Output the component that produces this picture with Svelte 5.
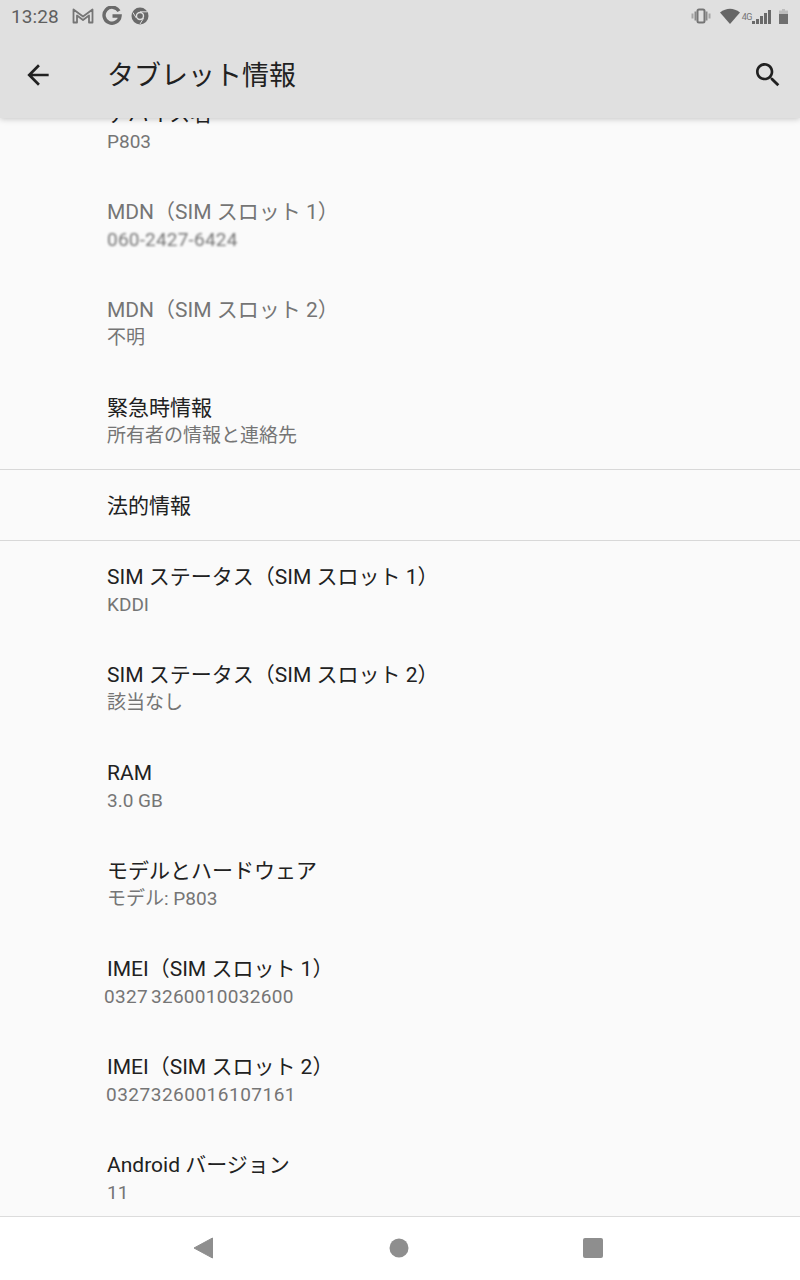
<script>
    const upper = [
        { title: "デバイス名", sub: "P803" },
        { title: "MDN（SIM スロット 1）", sub: "060-2427-6424", disabled: true, blur: true },
        { title: "MDN（SIM スロット 2）", sub: "不明", disabled: true },
        { title: "緊急時情報", sub: "所有者の情報と連絡先" }
    ];
    const lower = [
        { title: "SIM ステータス（SIM スロット 1）", sub: "KDDI" },
        { title: "SIM ステータス（SIM スロット 2）", sub: "該当なし" },
        { title: "RAM", sub: "3.0 GB" },
        { title: "モデルとハードウェア", sub: "モデル: P803" },
        { title: "IMEI（SIM スロット 1）", sub: "0327 3260010032600", cls: "imei1" },
        { title: "IMEI（SIM スロット 2）", sub: "03273260016107161", cls: "imei2" },
        { title: "Android バージョン", sub: "11" }
    ];
</script>

{#snippet row(item)}
    <div class="row" class:disabled={item.disabled}>
        <div class="title">{item.title}</div>
        <div class="sub {item.cls || ''}" class:blur={item.blur}>{item.sub}</div>
    </div>
{/snippet}

<div class="screen">
    <div class="appbar">
        <div class="status">
            <span class="time">13:28</span>
            <svg class="notif" width="22" height="18" viewBox="0 0 22 18">
                <path d="M1.500 15.500V2.500L11 9.500l9.500-7v13h-3.500V8.500L11 13 5 8.500v7z" fill="none" stroke="#757575" stroke-width="1.800" stroke-linejoin="round" />
            </svg>
            <svg class="notif" width="20" height="20" viewBox="0 0 20 20">
                <path d="M17 5.200A8 8 0 1 0 18 10h-7.500" fill="none" stroke="#6a6a6a" stroke-width="3.400" />
            </svg>
            <svg class="notif" width="18" height="18" viewBox="0 0 18 18">
                <circle cx="9" cy="9" r="8.500" fill="#6a6a6a" />
                <circle cx="9" cy="9" r="4.200" fill="#e0e0e0" />
                <circle cx="9" cy="9" r="2.800" fill="#6a6a6a" />
                <path d="M9 4.800h7M5.300 11l-3.400-5.500M12.600 11.200 9 17" stroke="#e0e0e0" stroke-width="1" />
            </svg>
            <span class="spacer"></span>
            <svg class="vibrate" width="20" height="16" viewBox="0 0 20 16">
                <rect x="6.500" y="1.500" width="7" height="13" rx="1.500" fill="none" stroke="#757575" stroke-width="2" />
                <path d="M3.500 3.500h2v9h-2zM14.500 3.500h2v9h-2z" fill="#8a8a8a" />
                <path d="M0.500 5.500h2v5h-2zM17.500 5.500h2v5h-2z" fill="#a5a5a5" />
            </svg>
            <svg class="wifi" width="20" height="16" viewBox="0 0 20 16">
                <path d="M0 4.500Q10-3 20 4.500L10 16z" fill="#666" />
            </svg>
            <span class="net">4G</span>
            <svg class="signal" width="19" height="14" viewBox="0 0 19 14">
                <path d="M0 11h3v3H0zM4 9h3v5H4zM8 6h3v8H8zM12 3h3v11h-3zM16 0h3v14h-3z" fill="#6a6a6a" />
            </svg>
            <svg class="battery" width="9" height="15" viewBox="0 0 9 15">
                <path d="M3 0h3v1.500h3V15H0V1.500h3z" fill="#bdbdbd" />
                <path d="M0 5h9v10H0z" fill="#6f6f6f" />
            </svg>
        </div>
        <div class="toolbar">
            <svg width="32" height="32" viewBox="0 0 24 24">
                <path d="M20 11H7.830l5.590-5.590L12 4l-8 8 8 8 1.410-1.410L7.830 13H20v-2z" fill="#212121" />
            </svg>
            <h1>タブレット情報</h1>
            <svg width="32" height="32" viewBox="0 0 24 24">
                <path d="M15.500 14h-.79l-.28-.27C15.410 12.590 16 11.110 16 9.500 16 5.910 13.090 3 9.500 3S3 5.910 3 9.500 5.910 16 9.500 16c1.610 0 3.090-.59 4.230-1.570l.27.28v.79l5 4.990L20.490 19l-4.990-5zm-6 0C7.010 14 5 11.990 5 9.500S7.010 5 9.500 5 14 7.010 14 9.500 11.990 14 9.500 14z" fill="#212121" />
            </svg>
        </div>
    </div>

    <div class="content">
        <div class="list">
            {#each upper as item}
                {@render row(item)}
            {/each}
            <div class="legal">法的情報</div>
            {#each lower as item}
                {@render row(item)}
            {/each}
        </div>
    </div>

    <div class="navbar">
        <svg width="22" height="22" viewBox="0 0 22 22">
            <path d="M1 11 19.500 1v20z" fill="#8e8e8e" stroke="#8e8e8e" stroke-linejoin="round" />
        </svg>
        <svg width="20" height="20" viewBox="0 0 20 20">
            <circle cx="10" cy="10" r="9.500" fill="#8e8e8e" />
        </svg>
        <svg width="20" height="20" viewBox="0 0 20 20">
            <rect width="20" height="20" rx="2" fill="#8e8e8e" />
        </svg>
    </div>
</div>

<style>
    :global(body) {
        margin: 0;
        background: #fafafa;
    }
    .screen {
        width: 800px;
        height: 1280px;
        display: flex;
        flex-direction: column;
        overflow: hidden;
        font-family: Roboto, "Noto Sans CJK JP", sans-serif;
    }
    .appbar {
        height: 118px;
        flex-shrink: 0;
        background: #e0e0e0;
        box-shadow: 0 1px 6px rgba(0, 0, 0, 0.22);
        position: relative;
        z-index: 1;
    }
    .status {
        height: 32px;
        display: flex;
        align-items: center;
        padding: 0 12px 0 11px;
    }
    .time {
        font-size: 19px;
        color: #5f5f5f;
        letter-spacing: 0.1px;
        margin-right: 13px;
    }
    .notif {
        margin-right: 8px;
    }
    .notif:nth-of-type(2) {
        margin-right: 9px;
    }
    .spacer {
        flex: 1;
    }
    .vibrate {
        margin-right: 9px;
    }
    .wifi {
        margin-right: 2px;
    }
    .net {
        font-size: 9px;
        color: #757575;
        letter-spacing: -0.5px;
        margin-top: 2px;
    }
    .signal {
        margin-right: 8px;
        margin-top: 1px;
    }
    .toolbar {
        height: 86px;
        display: flex;
        align-items: center;
        padding: 0 16px 0 22px;
        box-sizing: border-box;
    }
    h1 {
        flex: 1;
        margin: 0 0 3px 53px;
        font-size: 27px;
        font-weight: 400;
        color: #212121;
    }
    .content {
        flex: 1;
        min-height: 0;
        overflow: hidden;
    }
    .list {
        margin-top: -40px;
    }
    .row {
        height: 98px;
        box-sizing: border-box;
        padding: 22px 0 0 107px;
    }
    .title {
        font-size: 21px;
        line-height: 28px;
        color: #212121;
        white-space: nowrap;
    }
    .sub {
        font-size: 19px;
        line-height: 27px;
        color: #757575;
        white-space: nowrap;
    }
    .disabled .title {
        color: #757575;
    }
    .blur {
        filter: blur(1px);
        letter-spacing: 0.2px;
    }
    .imei1 {
        margin-left: -3px;
        letter-spacing: 0.3px;
        word-spacing: -2px;
    }
    .imei2 {
        margin-left: -1px;
        letter-spacing: 0.5px;
    }
    .legal {
        height: 72px;
        margin-top: -1px;
        box-sizing: border-box;
        border-top: 1px solid #d8d8d8;
        border-bottom: 1px solid #d8d8d8;
        padding: 0 0 2px 107px;
        display: flex;
        align-items: center;
        font-size: 21px;
        color: #212121;
    }
    .navbar {
        height: 64px;
        flex-shrink: 0;
        box-sizing: border-box;
        border-top: 1px solid #dcdcdc;
        background: #fff;
        display: flex;
        align-items: center;
        justify-content: center;
        gap: 174px;
        padding: 0 4px 2px 0;
    }
</style>
